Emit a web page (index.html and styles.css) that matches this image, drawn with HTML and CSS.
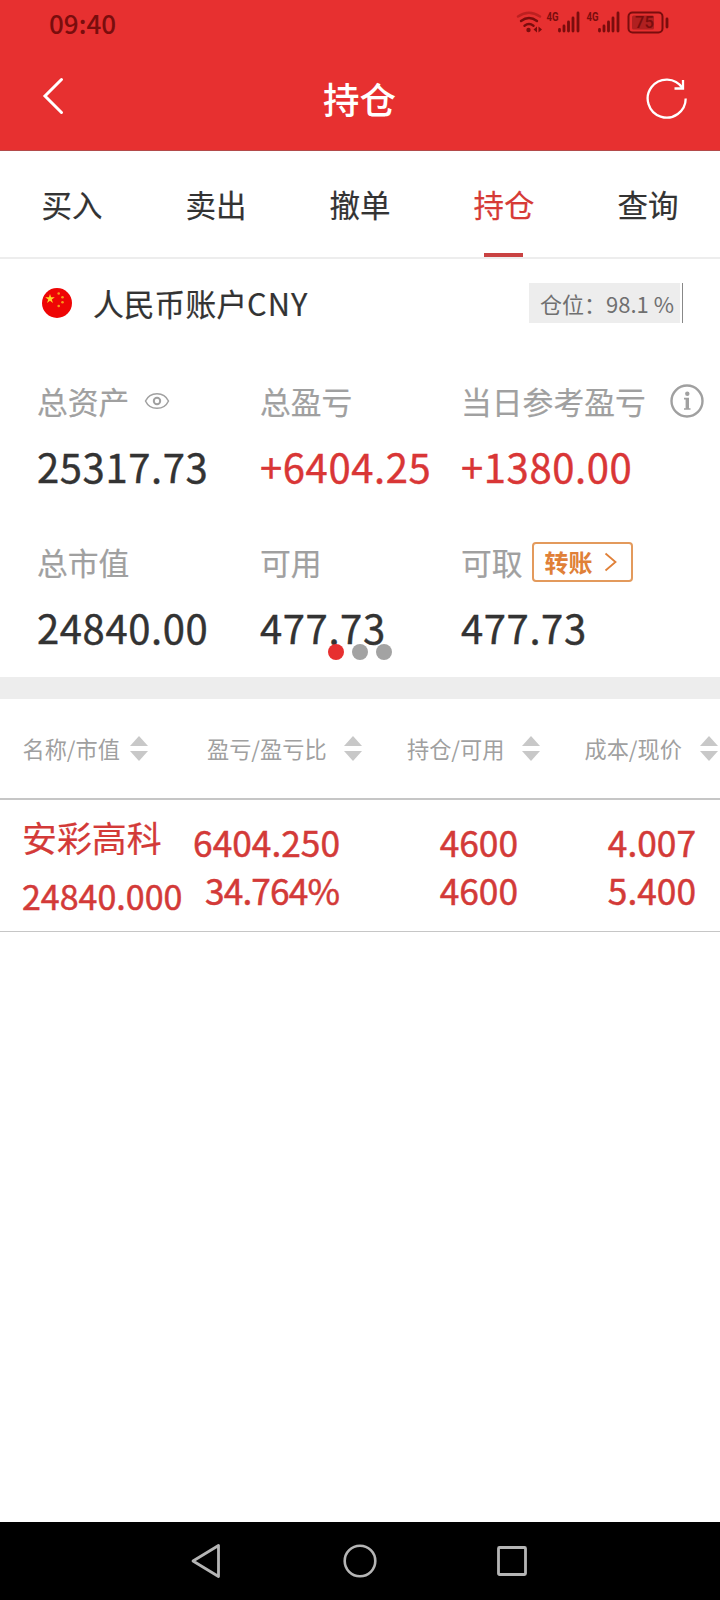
FILE: index.html
```html
<!DOCTYPE html>
<html lang="zh-CN">
<head>
<meta charset="utf-8">
<title>持仓</title>
<link rel="stylesheet" href="styles.css">
</head>
<body>
<div class="screen">
  <header class="top">
    <div class="status">
      <span class="time">09:40</span>
      <svg class="status-icons" width="156" height="26" viewBox="0 0 156 26">
        <g fill="none" stroke="#7a0d0d" stroke-width="2.400" stroke-linecap="round">
          <path d="M2 6.500Q13 -1 24 6.500" stroke="#bd2020"/>
          <path d="M5 11Q13 5 21 11"/>
          <path d="M8.500 15.700Q13 12.500 17.500 15.700"/>
        </g>
        <g fill="#7a0d0d">
          <circle cx="12.500" cy="20" r="2.200"/>
          <path d="M21 16.500v6l-3.500-3zM22.500 16.500v6l3.500-3z"/>
          <text class="net" x="30.500" y="11" textLength="12" lengthAdjust="spacingAndGlyphs">4G</text>
          <text class="net" x="70.500" y="11" textLength="12" lengthAdjust="spacingAndGlyphs">4G</text>
        </g>
        <g stroke="#7a0d0d" stroke-width="2.800" stroke-linecap="round">
          <path d="M43.500 19.500V21M48 16V21M52.500 12V21M57 8V21M62 3V21"/>
          <path d="M83.500 19.500V21M88 16V21M92.500 12V21M97 8V21M102 3V21"/>
          <path d="M151 9V17"/>
        </g>
        <rect x="112.500" y="2.500" width="34" height="20" rx="4" fill="none" stroke="#7a0d0d" stroke-width="2"/>
        <rect x="116" y="5.500" width="22" height="14" rx="1.500" fill="#b02020"/>
        <text class="battery" x="128.500" y="18" text-anchor="middle" fill="#7a0d0d">75</text>
      </svg>
    </div>
    <div class="titlebar">
      <svg class="back" width="24" height="40" viewBox="0 0 24 40"><path d="M20.500 3.500L4 20L20.500 36.500" fill="none" stroke="#fff" stroke-width="3" stroke-linecap="round"/></svg>
      <h1 class="title">持仓</h1>
      <svg width="42" height="42" viewBox="0 0 42 42" fill="none" stroke="#fff" stroke-width="2.300"><path d="M39.700 21.500A19 19 0 1 1 36.500 11"/><path d="M37 3V11.500H28.500"/></svg>
    </div>
  </header>

  <nav class="tabs">
    <span class="tab">买入</span>
    <span class="tab">卖出</span>
    <span class="tab">撤单</span>
    <span class="tab active">持仓</span>
    <span class="tab">查询</span>
  </nav>

  <section class="summary">
    <div class="account">
      <svg width="30" height="30" viewBox="0 0 30 30">
        <circle cx="15" cy="15" r="15" fill="#ee0505"/>
        <path d="M8 6l1.100 3.300h3.700l-3 2.100 1.200 3.600-3-2.200-3 2.200 1.200-3.600-3-2.100h3.700z" fill="#ffd52b"/>
        <g fill="#f79a1b"><circle cx="16.700" cy="5.500" r="1.300"/><circle cx="20.500" cy="9.300" r="1.300"/><circle cx="20.500" cy="14.300" r="1.300"/><circle cx="16.700" cy="18" r="1.300"/></g>
      </svg>
      <span class="account-name">人民币账户<span class="currency">CNY</span></span>
      <div class="position"><span class="position-text">仓位：98.1 %</span></div>
    </div>
    <div class="metrics">
      <div class="metric">
        <div class="label">总资产
          <svg class="eye" width="26" height="18" viewBox="0 0 26 18" fill="none" stroke="#a0a0a0" stroke-width="1.500"><path d="M1.500 9C6 -.8 20 -.8 24.500 9C20 18.800 6 18.800 1.500 9Z"/><circle cx="13" cy="9" r="3.200" stroke-width="2"/></svg>
        </div>
        <div class="value">25317.73</div>
      </div>
      <div class="metric">
        <div class="label">总盈亏</div>
        <div class="value up">+6404.25</div>
      </div>
      <div class="metric">
        <div class="label">当日参考盈亏
          <svg class="info" width="34" height="34" viewBox="0 0 34 34"><circle cx="17" cy="17" r="15.500" fill="none" stroke="#a0a0a0" stroke-width="2.400"/><g fill="#a0a0a0"><circle cx="17.300" cy="9.800" r="2.200"/><path d="M14 13.800h5v10.400h1.500v1.600h-6.500v-1.600h1.600v-8.800h-1.600z"/></g></svg>
        </div>
        <div class="value up">+1380.00</div>
      </div>
      <div class="metric">
        <div class="label">总市值</div>
        <div class="value">24840.00</div>
      </div>
      <div class="metric">
        <div class="label">可用</div>
        <div class="value">477.73</div>
      </div>
      <div class="metric">
        <div class="label">可取
          <span class="transfer">转账<svg width="14" height="20" viewBox="0 0 14 20"><path d="M1.500 1.500L11.500 10L1.500 18.500" fill="none" stroke="#e08038" stroke-width="1.800"/></svg></span>
        </div>
        <div class="value">477.73</div>
      </div>
    </div>
    <div class="pager"><i class="dot current"></i><i class="dot"></i><i class="dot"></i></div>
  </section>

  <section class="holdings">
    <div class="head">
      <div class="th">名称/市值<i class="sort"></i></div>
      <div class="th">盈亏/盈亏比<i class="sort"></i></div>
      <div class="th">持仓/可用<i class="sort"></i></div>
      <div class="th">成本/现价<i class="sort"></i></div>
    </div>
    <div class="row">
      <div class="stock"><div class="stock-name">安彩高科</div><div class="stock-value">24840.000</div></div>
      <div class="pair"><div>6404.250</div><div class="ratio">34.764%</div></div>
      <div class="pair"><div>4600</div><div>4600</div></div>
      <div class="pair"><div>4.007</div><div>5.400</div></div>
    </div>
  </section>

  <footer class="navbar">
    <svg width="34" height="36" viewBox="0 0 34 36"><path d="M28.500 2.500V33.500L3 18Z" fill="none" stroke="#b5b5b5" stroke-width="2.800" stroke-linejoin="round"/></svg>
    <svg width="36" height="36" viewBox="0 0 36 36"><circle cx="18" cy="18" r="15.300" fill="none" stroke="#b5b5b5" stroke-width="2.600"/></svg>
    <svg width="34" height="36" viewBox="0 0 34 36"><rect x="2.500" y="4.500" width="27" height="27" rx="1" fill="none" stroke="#b5b5b5" stroke-width="2.800"/></svg>
  </footer>
</div>
</body>
</html>
```
FILE: styles.css
```css
* { box-sizing: border-box; }
body {
  margin: 0;
  background: #fff;
  color: #333;
  font-family: "Noto Sans CJK SC", sans-serif;
}
svg { display: block; flex: none; }
.screen {
  display: flex;
  flex-direction: column;
  width: 720px;
  height: 1600px;
  overflow: hidden;
}

.top {
  flex: none;
  height: 151px;
  background: #e73030;
  border-bottom: 1px solid #b34a4a;
}
.status {
  display: flex;
  justify-content: space-between;
  height: 46px;
  padding: 0 48px 0 49px;
}
.time {
  font-size: 26px;
  font-weight: 500;
  line-height: 45px;
  color: #7a0d0d;
}
.status-icons { margin: 10px 0 0; }
.net { font: 700 12.5px Roboto, sans-serif; }
.battery { font: 500 16.5px Roboto, sans-serif; }
.titlebar {
  display: flex;
  align-items: center;
  justify-content: space-between;
  height: 103px;
  padding: 0 32px 0 41px;
}
.back { margin-bottom: 3px; }
.title {
  margin: 2px 0 0 8px;
  font-size: 36.5px;
  font-weight: 500;
  line-height: 50px;
  color: #fff;
}

.tabs {
  display: grid;
  grid-template-columns: repeat(5, 1fr);
  flex: none;
  height: 108px;
  border-bottom: 2px solid #ededed;
}
.tab {
  display: flex;
  flex-direction: column;
  align-items: center;
  font-size: 30.5px;
  line-height: 106px;
  -webkit-text-stroke: .2px;
}
.tab.active { color: #d63a36; }
.tab.active::after {
  content: "";
  flex: none;
  width: 39px;
  height: 4px;
  margin: -4px 1px 0 0;
  background: #c94242;
}

.summary {
  position: relative;
  flex: none;
  height: 440px;
  border-bottom: 22px solid #ededed;
}
.account {
  display: flex;
  align-items: center;
  height: 88px;
  padding: 0 37px 0 42px;
}
.account-name {
  margin-left: 21px;
  font-size: 30.8px;
  line-height: 44px;
  -webkit-text-stroke: .2px;
}
.currency { letter-spacing: 1px; }
.position {
  margin-left: auto;
  width: 154px;
  height: 40px;
  padding-right: 2px;
  border-right: 1px solid #888;
}
.position-text {
  display: block;
  height: 40px;
  padding-left: 11px;
  background: #ededed;
  color: #707070;
  font-size: 22px;
  line-height: 40px;
  white-space: nowrap;
}
.metrics {
  display: grid;
  grid-template-columns: 223px 201px 1fr;
  row-gap: 41px;
  padding: 29px 0 0 37px;
}
.label {
  display: flex;
  align-items: center;
  height: 50px;
  font-size: 30.8px;
  line-height: 50px;
  color: #a0a0a0;
  white-space: nowrap;
  -webkit-text-stroke: .2px;
}
.eye { margin-left: 15px; }
.info { margin-left: 24px; }
.value {
  margin-top: 10px;
  height: 60px;
  font-size: 40px;
  line-height: 61px;
  letter-spacing: .6px;
  -webkit-text-stroke: .4px;
}
.up { color: #d93636; }
.transfer {
  display: flex;
  align-items: center;
  gap: 11px;
  width: 101px;
  height: 40px;
  margin-left: 9px;
  padding-left: 11px;
  border: 2px solid #e39a5c;
  border-radius: 4px;
  color: #e08038;
  font-size: 24px;
  font-weight: 700;
  line-height: 36px;
  -webkit-text-stroke: 0;
}
.pager {
  position: absolute;
  top: 385px;
  left: 328px;
  display: flex;
  gap: 8px;
}
.dot {
  width: 16px;
  height: 16px;
  border-radius: 50%;
  background: #a3a3a3;
}
.dot.current { background: #e73030; }

.head {
  display: grid;
  grid-template-columns: 184.500px 200px 177.500px 1fr;
  height: 101px;
  padding: 0 0 1px 22.500px;
  border-bottom: 2px solid #c6c6c6;
}
.th {
  display: flex;
  align-items: center;
  justify-content: space-between;
  padding-right: 59px;
  font-size: 22.2px;
  line-height: 32px;
  color: #a0a0a0;
  white-space: nowrap;
}
.th:nth-child(2) { padding-right: 45px; }
.th:nth-child(3) { padding-right: 45px; }
.th:nth-child(4) { padding-right: 2px; }
.sort {
  display: flex;
  flex-direction: column;
  gap: 5px;
  margin-top: 1px;
}
.sort::before,
.sort::after {
  content: "";
  border: 9px solid transparent;
}
.sort::before { border-top: 0; border-bottom: 10.500px solid #c8c8c8; }
.sort::after { border-bottom: 0; border-top: 10.500px solid #c8c8c8; }

.row {
  display: grid;
  grid-template-columns: 168px 150px 178px 178px;
  height: 132px;
  padding-left: 22px;
  border-bottom: 1px solid #c6c6c6;
  color: #d33a38;
  -webkit-text-stroke: .5px;
}
.stock { padding-top: 12px; }
.stock-name {
  font-size: 34.900px;
  line-height: 50px;
  -webkit-text-stroke: .2px;
}
.stock-value {
  margin-top: 9px;
  font-size: 34px;
  line-height: 50px;
}
.pair {
  padding-top: 18px;
  font-size: 35.300px;
  line-height: 48px;
  text-align: right;
}
.ratio {
  margin-right: 1px;
  letter-spacing: -.9px;
}

.navbar {
  display: flex;
  justify-content: center;
  gap: 118px;
  flex: none;
  height: 78px;
  margin-top: auto;
  padding-top: 21px;
  background: #000;
}
```
